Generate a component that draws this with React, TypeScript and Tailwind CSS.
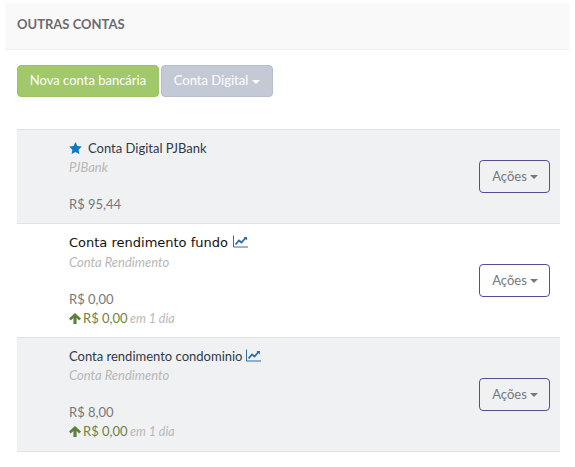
import React from "react";

const Caret = ({ tight }: { tight?: boolean }) => (
  <span className={`inline-block align-middle w-0 h-0 border-t-[4px] border-x-[4px] border-x-transparent border-t-current ${tight ? "ml-[3px]" : "ml-[4px]"}`} />
);

const Chart = ({ tight }: { tight?: boolean }) => (
  <svg className={`inline-block align-[-1px] ${tight ? "ml-[3px]" : "ml-[5px]"}`} width="15" height="13" viewBox="0 0 15 13" fill="none">
    <path d="M0.5 0.5V12H15" stroke="#2e6da4" strokeWidth="1" />
    <path d="M2.5 9.5L6 5.5L8.5 7.5L12.5 3" stroke="#2e6da4" strokeWidth="1.8" />
    <path d="M10.5 2H14V5.5Z" fill="#2e6da4" />
  </svg>
);

const Star = () => (
  <svg className="inline-block mr-[6px] align-[-1px]" width="13" height="12" viewBox="0 0 24 23">
    <path d="M12 0l3.7 7.6 8.3 1.2-6 5.9 1.4 8.3-7.4-3.9-7.4 3.9L6 14.7 0 8.8l8.3-1.2z" fill="#0a7ac4" />
  </svg>
);

const ArrowUp = () => (
  <svg className="inline-block mr-[2px] align-[-1px]" width="12" height="11" viewBox="0 0 12 11">
    <path d="M6 0L12 5.6L10.2 7.4L7.6 5V11H4.4V5L1.8 7.4L0 5.6Z" fill="#5f7f3f" />
  </svg>
);

function Row({
  shaded,
  title,
  titleClass,
  sub,
  amount,
  yieldLine,
  star,
  chart,
  tight,
  low,
}: {
  shaded?: boolean;
  title: string;
  titleClass?: string;
  sub: string;
  amount: string;
  yieldLine?: boolean;
  star?: boolean;
  chart?: boolean;
  tight?: boolean;
  low?: boolean;
}) {
  return (
    <div className={`flex items-center border-b border-[#e0e2e5] pl-[52px] pr-[10px] ${shaded ? "bg-[#f0f1f3]" : "bg-white"}`}>
      <div className={`flex-1 pb-[9px] ${low ? "pt-[9px]" : "pt-[8px]"}`}>
        <div className={`h-[20px] leading-[20px] text-[13px] ${titleClass ?? "text-[#2f3a46]"}`}>
          {star && <Star />}
          {title}
          {chart && <Chart tight={tight} />}
        </div>
        <div className="h-[18px] leading-[18px] text-[13px] italic text-[#b8b8b8]">{sub}</div>
        <div className="mt-[18px] h-[20px] leading-[20px] text-[13px] text-[#77787c]">{amount}</div>
        {yieldLine && (
          <div className={`leading-[18px] text-[13px] text-[#6d8245] ${low ? "h-[19px]" : "h-[20px]"}`}>
            <ArrowUp />
            R$ 0,00 <span className="italic text-[12.5px] -ml-px text-[#b8b8b8]">em 1 dia</span>
          </div>
        )}
      </div>
      <button className="w-[71px] h-[33px] pl-px rounded-[4px] border border-[#5b4a96] text-[13px] text-[#77787c]">
        Ações
        <Caret tight />
      </button>
    </div>
  );
}

export default function App() {
  return (
    <div className="w-[575px] h-[467px] bg-white font-['Lato','Liberation_Sans',sans-serif] pt-[3px] pl-[5px] pr-[6px]">
      <div className="h-[47px] flex items-center pl-[12px] pb-[2px] bg-[#f9f9f9] border-b border-[#f0f0f0] text-[13px] font-bold text-[#6b6b70]">
        OUTRAS CONTAS
      </div>
      <div className="pl-[12px] pr-[9px] pt-[15px]">
        <div className="flex gap-[2px] h-[32px]">
          <button className="w-[142px] rounded-[4px] bg-[#a1c96b] border border-[#9bc465] text-white text-[13px]">
            Nova conta bancária
          </button>
          <button className="w-[112px] rounded-[4px] bg-[#c4c9d6] border border-[#b8bdcb] text-white text-[13px]">
            Conta Digital
            <Caret />
          </button>
        </div>
        <div className="mt-[32px] border-t border-[#e0e2e5]">
          <Row shaded star title="Conta Digital PJBank" sub="PJBank" amount="R$ 95,44" />
          <Row
            low
            title="Conta rendimento fundo"
            titleClass="text-[#111] font-['DejaVu_Sans',sans-serif]"
            sub="Conta Rendimento"
            amount="R$ 0,00"
            yieldLine
            chart
          />
          <Row shaded title="Conta rendimento condominio" sub="Conta Rendimento" amount="R$ 8,00" yieldLine chart tight />
        </div>
      </div>
    </div>
  );
}
